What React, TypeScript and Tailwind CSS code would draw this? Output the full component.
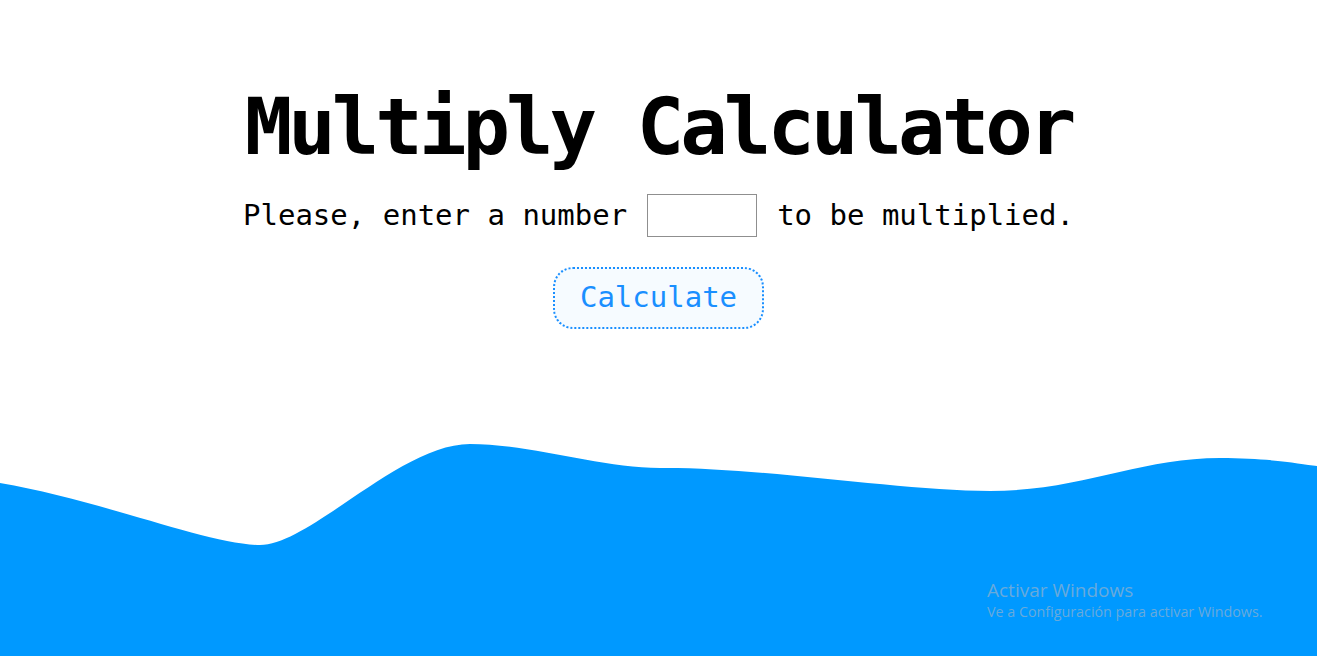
import React from "react";

function Wave() {
  return (
    <svg
      className="block w-full h-[212px]"
      viewBox="0 0 1317 212"
      preserveAspectRatio="none"
    >
      <path
        fill="#0099ff"
        d="M0,39 C100,56 210,101 260,101 C310,101 400,0 470,0 C530,0 600,24 660,24 C760,23 900,47 990,47 C1080,47 1140,14 1220,14 C1270,14 1300,20 1317,22 L1317,212 L0,212 Z"
      />
    </svg>
  );
}

export default function App() {
  return (
    <div className="relative min-h-screen flex flex-col bg-white overflow-hidden">
      <main className="flex flex-col items-center pt-[79px]">
        <h1 className="font-['DejaVu_Sans_Mono',monospace] font-bold text-[79px] tracking-[-4px] leading-[96px] text-black">
          Multiply Calculator
        </h1>
        <p className="mt-[19px] flex items-center gap-[20px] font-['DejaVu_Sans_Mono',monospace] text-[29px] text-black">
          <span>Please, enter a number</span>
          <input
            type="text"
            className="w-[110px] h-[43px] border border-[#8f8f8f] bg-white outline-none"
          />
          <span>to be multiplied.</span>
        </p>
        <button className="mt-[29px] w-[211px] h-[62px] rounded-[20px] border-2 border-dotted border-[#1a8fff] bg-[#f6fbff] text-[#1a8fff] font-['DejaVu_Sans_Mono',monospace] text-[29px]">
          Calculate
        </button>
      </main>
      <div className="mt-auto">
        <Wave />
      </div>
      <div className="absolute left-[987px] top-[578px] font-['Open_Sans',sans-serif] text-[#68aadb]">
        <div className="text-[19px] leading-[24px]">Activar Windows</div>
        <div className="text-[14.3px] leading-[20px]">Ve a Configuración para activar Windows.</div>
      </div>
    </div>
  );
}
